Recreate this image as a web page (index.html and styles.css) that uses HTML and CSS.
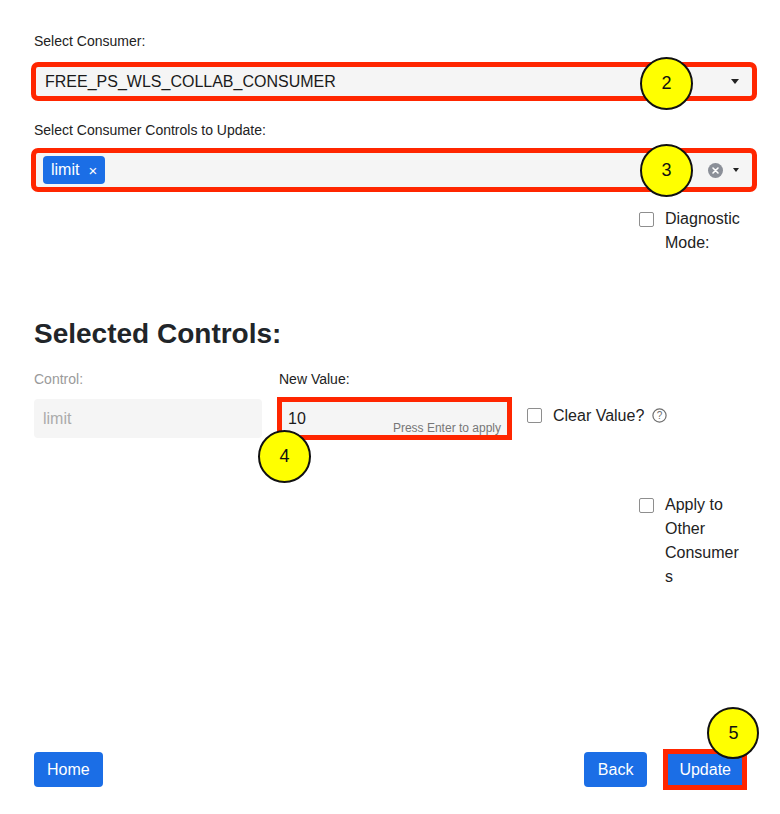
FILE: index.html
```html
<!DOCTYPE html>
<html lang="en">
<head>
<meta charset="utf-8">
<title>Update Consumer Controls</title>
<link rel="stylesheet" href="styles.css">
</head>
<body>
<div class="page">
  <div class="lbl lbl-first">Select Consumer:</div>
  <div class="select select-single annotated">
    <span class="select-value">FREE_PS_WLS_COLLAB_CONSUMER</span>
    <span class="caret"></span>
    <div class="marker m2">2</div>
  </div>

  <div class="lbl lbl-second">Select Consumer Controls to Update:</div>
  <div class="select select-multi annotated">
    <span class="tag"><span>limit</span><span class="tag-x">×</span></span>
    <span class="spacer"></span>
    <span class="clear-ico"><svg width="15" height="15" viewBox="0 0 15 15"><circle cx="7.5" cy="7.5" r="7.5" fill="#8b8f98"/><path d="M5 5 L10 10 M10 5 L5 10" stroke="#fff" stroke-width="1.6" stroke-linecap="round"/></svg></span>
    <span class="caret caret-small"></span>
    <div class="marker m3">3</div>
  </div>

  <div class="opt-row opt-diag">
    <div class="opt">
      <span class="cbox"></span>
      <span class="opt-text">Diagnostic Mode:</span>
    </div>
  </div>

  <h2 class="heading">Selected Controls:</h2>

  <div class="ctrl-grid">
    <div class="col col-control">
      <div class="lbl lbl-muted">Control:</div>
      <div class="input input-disabled">limit</div>
    </div>
    <div class="col col-value">
      <div class="lbl">New Value:</div>
      <div class="input input-value annotated-in">
        <span>10</span>
        <span class="hint">Press Enter to apply</span>
        <div class="marker m4">4</div>
      </div>
    </div>
    <div class="col col-clear">
      <div class="clear-opt">
        <span class="cbox"></span>
        <span class="clear-text">Clear Value?</span>
        <svg class="qmark" width="15" height="15" viewBox="0 0 15 15"><circle cx="7.5" cy="7.5" r="6.6" fill="none" stroke="#6f6f6f" stroke-width="1.2"/><text x="7.5" y="11.2" text-anchor="middle" font-family="Liberation Sans, Arial, sans-serif" font-size="10" fill="#6f6f6f">?</text></svg>
      </div>
    </div>
  </div>

  <div class="opt-row opt-apply">
    <div class="opt">
      <span class="cbox"></span>
      <span class="opt-text">Apply to Other Consumers</span>
    </div>
  </div>

  <div class="footer">
    <button class="btn">Home</button>
    <div class="footer-right">
      <button class="btn btn-back">Back</button>
      <button class="btn btn-annot">Update<span class="marker m5">5</span></button>
    </div>
  </div>
</div>
</body>
</html>
```

FILE: styles.css
```css
* { box-sizing: border-box; }
html, body { margin: 0; padding: 0; background: #fff; }
body {
  font-family: "Liberation Sans", Arial, Helvetica, sans-serif;
  color: #212529;
  width: 780px;
  height: 814px;
  overflow: hidden;
}
.page {
  width: 780px;
  padding: 0 26px 0 34px;
}
.lbl {
  font-size: 14px;
  line-height: 20px;
  color: #222;
}
.lbl-first { padding-top: 31px; margin-bottom: 14px; }
.lbl-second { margin-top: 22px; margin-bottom: 11px; }
.lbl-muted { color: #9a9a9a; }

.select {
  position: relative;
  display: flex;
  align-items: center;
  background: #f5f5f5;
  border-radius: 4px;
}
.annotated { outline: 5px solid #ff2600; outline-offset: -2px; }
.select-single { height: 33px; padding: 0 15px 0 11px; }
.select-value { flex: 1; font-size: 16px; color: #1a1a1a; }
.caret {
  width: 0; height: 0;
  border-left: 4.5px solid transparent;
  border-right: 4.5px solid transparent;
  border-top: 5px solid #222;
}
.caret-small {
  border-left-width: 3.5px;
  border-right-width: 3.5px;
  border-top-width: 4px;
  margin-left: 10px;
}
.select-multi { height: 38px; padding: 0 15px 0 9px; }
.tag {
  display: inline-flex;
  align-items: center;
  gap: 9px;
  height: 28px;
  padding: 0 8px;
  background: #1b6ee6;
  color: #fff;
  border-radius: 4px;
  font-size: 16px;
}
.tag-x { font-size: 15px; }
.spacer { flex: 1; }
.clear-ico { display: flex; }

.marker {
  position: absolute;
  width: 53px; height: 53px;
  border-radius: 50%;
  background: #ffff00;
  border: 2.5px solid #111;
  display: flex;
  align-items: center;
  justify-content: center;
  font-size: 18px;
  color: #111;
  font-family: "Liberation Sans", Arial, sans-serif;
  font-weight: normal;
  z-index: 2;
}
.m2 { left: 606px; top: -8px; }
.m3 { left: 606px; top: -7px; }
.m4 { left: -21px; top: 31px; }
.m5 { left: 41px; top: -45px; width: 52px; height: 52px; }

.opt-row { display: flex; justify-content: flex-end; }
.opt {
  width: 115px;
  display: flex;
  align-items: flex-start;
  gap: 11px;
}
.cbox {
  flex: none;
  width: 15px; height: 15px;
  border: 1.5px solid #8e8e8e;
  border-radius: 2px;
  background: #fff;
  margin-top: 5px;
}
.opt-text {
  width: 80px;
  font-size: 16px;
  line-height: 24px;
  color: #222;
  overflow-wrap: anywhere;
}
.opt-diag { margin-top: 18px; }

.heading {
  margin: 62px 0 0;
  font-size: 28px;
  line-height: 34px;
  font-weight: bold;
  color: #212529;
}

.ctrl-grid {
  display: flex;
  gap: 17px;
  margin-top: 18px;
}
.col-control { width: 228px; }
.col-value { width: 231px; }
.input {
  position: relative;
  height: 39px;
  margin-top: 10px;
  display: flex;
  align-items: center;
  padding: 0 9px;
  background: #f5f5f5;
  border-radius: 4px;
  font-size: 16px;
}
.input-disabled { color: #ababab; }
.input-value { color: #1a1a1a; }
.annotated-in { outline: 5px solid #ff2600; outline-offset: -3px; border-radius: 0; }
.hint {
  position: absolute;
  right: 9px;
  bottom: 3px;
  font-size: 12px;
  color: #777;
}
.col-clear { padding-top: 39px; }
.clear-opt {
  display: flex;
  align-items: center;
  gap: 11px;
  height: 15px;
}
.clear-opt .cbox { margin-top: 0; }
.clear-text { font-size: 16px; color: #222; }
.qmark { margin-left: -3px; }

.opt-apply { margin-top: 55px; }

.footer {
  display: flex;
  justify-content: space-between;
  align-items: center;
  margin-top: 163px;
  padding-right: 10px;
}
.footer-right { display: flex; gap: 19px; }
.btn {
  position: relative;
  height: 35px;
  padding: 0 13px;
  border: none;
  border-radius: 4px;
  background: #1b6ee6;
  color: #fff;
  font-family: "Liberation Sans", Arial, sans-serif;
  font-size: 16px;
}
.btn-back { padding: 0 14px; }
.btn-annot { outline: 5px solid #ff2600; outline-offset: -2px; border-radius: 0; }
```
